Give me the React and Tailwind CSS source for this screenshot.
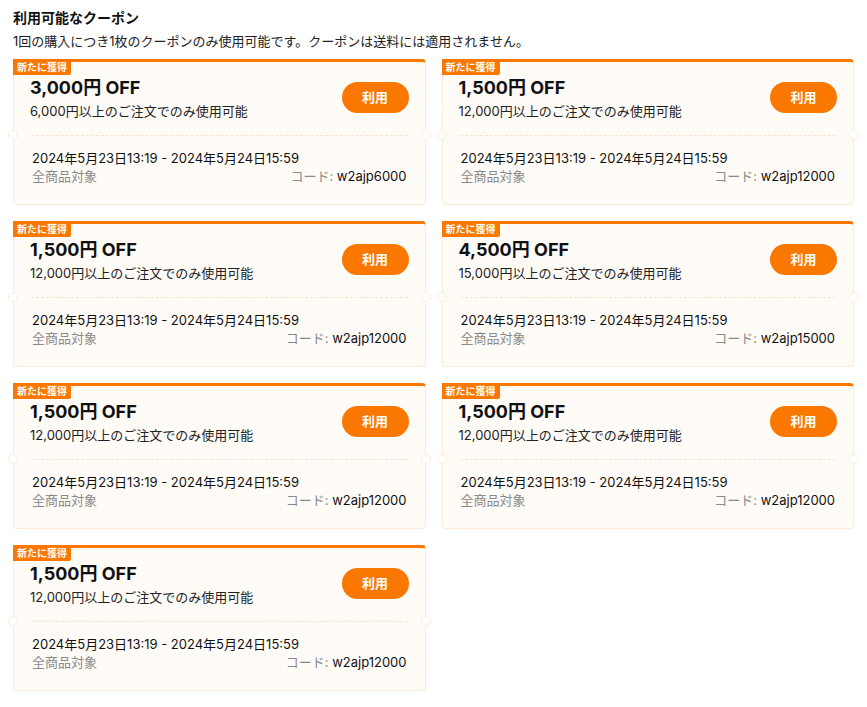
const coupons = [
  { amount: '3,000', min: '6,000', code: 'w2ajp6000' },
  { amount: '1,500', min: '12,000', code: 'w2ajp12000' },
  { amount: '1,500', min: '12,000', code: 'w2ajp12000' },
  { amount: '4,500', min: '15,000', code: 'w2ajp15000' },
  { amount: '1,500', min: '12,000', code: 'w2ajp12000' },
  { amount: '1,500', min: '12,000', code: 'w2ajp12000' },
  { amount: '1,500', min: '12,000', code: 'w2ajp12000' },
];

function CouponCard({ amount, min, code }) {
  return (
    <div className="relative rounded-[4px] border border-[#fcebd9] border-t-[3px] border-t-[#fa7800] bg-[#fffbf7]">
      <span className="absolute -left-px -top-[3px] rounded-br-[2px] bg-[#fa7800] px-[4px] text-[10px] font-bold leading-[16px] text-white">
        新たに獲得
      </span>

      <div className="flex items-center justify-between pl-[16px] pr-[16px] pt-[15px] pb-[14px]">
        <div>
          <p className="text-[18px] font-bold leading-[22px] text-[#111]">{amount}円 OFF</p>
          <p className="mt-[2px] text-[13px] leading-[20px] text-[#222]">{min}円以上のご注文でのみ使用可能</p>
        </div>
        <button className="mb-[3px] h-[31px] w-[67px] rounded-full bg-[#fa7800] text-[13px] font-bold text-white">
          利用
        </button>
      </div>

      {/* perforation */}
      <div className="relative">
        <div className="mx-[17px] border-t border-dashed border-[#fbe2c8]" />
        <span className="absolute -left-[6px] -top-[5px] h-[10px] w-[10px] rounded-full border border-[#fcebd9] bg-white" />
        <span className="absolute -right-[6px] -top-[5px] h-[10px] w-[10px] rounded-full border border-[#fcebd9] bg-white" />
      </div>

      <div className="px-[18px] pt-[13px] pb-[19px] text-[13px] leading-[18px]">
        <p className="text-[#111]">2024年5月23日13:19 - 2024年5月24日15:59</p>
        <div className="flex justify-between">
          <span className="text-[#8a8a8a]">全商品対象</span>
          <span className="text-[#8a8a8a]">
            コード: <span className="text-[#111]">{code}</span>
          </span>
        </div>
      </div>
    </div>
  );
}

export default function App() {
  return (
    <div
      className="min-h-screen bg-white p-[13px] pt-[8px]"
      style={{ fontFamily: 'Inter, "Noto Sans CJK JP", sans-serif' }}
    >
      <h2 className="text-[14px] font-bold leading-[20px] text-[#111]">利用可能なクーポン</h2>
      <p className="mt-[3px] text-[13px] leading-[20px] text-[#222]">
        1回の購入につき1枚のクーポンのみ使用可能です。クーポンは送料には適用されません。
      </p>

      <div className="mt-[8px] grid grid-cols-2 gap-4">
        {coupons.map((c, i) => (
          <CouponCard key={i} {...c} />
        ))}
      </div>
    </div>
  );
}
